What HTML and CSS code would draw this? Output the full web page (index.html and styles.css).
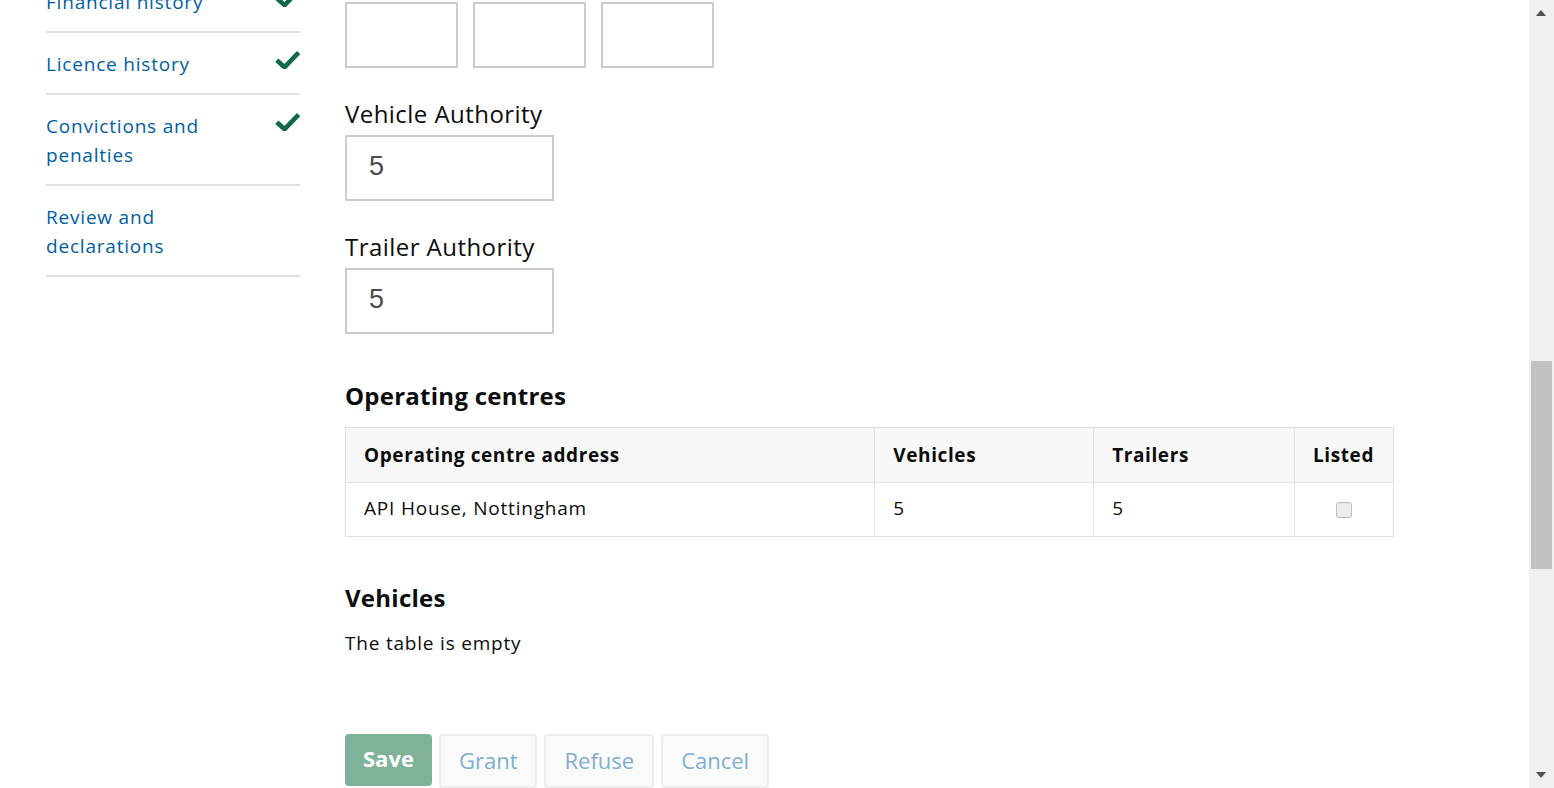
FILE: index.html
```html
<!DOCTYPE html>
<html lang="en">
<head>
<meta charset="utf-8">
<title>Application review</title>
<link rel="stylesheet" href="styles.css">
</head>
<body>
<div class="page">
  <nav class="sidebar">
    <ul class="steps">
      <li class="step">
        <a class="step-link" href="#">Financial history</a>
        <svg class="tick" viewBox="0 0 25 19" aria-hidden="true"><path d="M1.8 10.2 L9.6 17.2 L23.6 2.6" fill="none" stroke="#11684a" stroke-width="4.6"/></svg>
      </li>
      <li class="step">
        <a class="step-link" href="#">Licence history</a>
        <svg class="tick" viewBox="0 0 25 19" aria-hidden="true"><path d="M1.8 10.2 L9.6 17.2 L23.6 2.6" fill="none" stroke="#11684a" stroke-width="4.6"/></svg>
      </li>
      <li class="step">
        <a class="step-link" href="#">Convictions and penalties</a>
        <svg class="tick" viewBox="0 0 25 19" aria-hidden="true"><path d="M1.8 10.2 L9.6 17.2 L23.6 2.6" fill="none" stroke="#11684a" stroke-width="4.6"/></svg>
      </li>
      <li class="step">
        <a class="step-link" href="#">Review and declarations</a>
      </li>
    </ul>
  </nav>

  <main class="main">
    <div class="field">
      <span class="label label-date">Date of application</span>
      <div class="date-row">
        <input class="date-box" type="text" aria-label="Day">
        <input class="date-box" type="text" aria-label="Month">
        <input class="date-box" type="text" aria-label="Year">
      </div>
    </div>

    <div class="field">
      <label class="label" for="veh">Vehicle Authority</label>
      <input class="text-input" id="veh" type="text" value="5">
    </div>

    <div class="field">
      <label class="label" for="trl">Trailer Authority</label>
      <input class="text-input" id="trl" type="text" value="5">
    </div>

    <h2 class="section-title section-title-first">Operating centres</h2>
    <table class="oc-table">
      <thead>
        <tr>
          <th class="col-address">Operating centre address</th>
          <th class="col-vehicles">Vehicles</th>
          <th class="col-trailers">Trailers</th>
          <th class="col-listed">Listed</th>
        </tr>
      </thead>
      <tbody>
        <tr>
          <td>API House, Nottingham</td>
          <td>5</td>
          <td>5</td>
          <td class="cell-center"><input class="listed-box" type="checkbox" disabled aria-label="Listed"></td>
        </tr>
      </tbody>
    </table>

    <h2 class="section-title">Vehicles</h2>
    <p class="empty">The table is empty</p>

    <div class="actions">
      <button class="btn btn-primary" type="button">Save</button>
      <button class="btn" type="button">Grant</button>
      <button class="btn" type="button">Refuse</button>
      <button class="btn" type="button">Cancel</button>
    </div>
  </main>
</div>

<div class="scrollbar" aria-hidden="true">
  <span class="sb-up"></span>
  <span class="sb-thumb"></span>
  <span class="sb-down"></span>
</div>
</body>
</html>
```

FILE: styles.css
```css
* {
  box-sizing: border-box;
}

html,
body {
  margin: 0;
  height: 100%;
  overflow: hidden;
}

body {
  font-family: "Open Sans", "Noto Sans", Arial, sans-serif;
  color: #0b0c0c;
  background: #ffffff;
}

.page {
  display: flex;
  gap: 45px;
  width: 1529px;
  padding-left: 46px;
  margin-top: -31px;
}

/* Sidebar */
.sidebar {
  width: 254px;
  flex: none;
}

.steps {
  list-style: none;
  margin: 0;
  padding: 0;
}

.step {
  display: flex;
  justify-content: space-between;
  align-items: flex-start;
  padding: 17px 0 14px;
  border-top: 2px solid #dee0e2;
}

.step:last-child {
  border-bottom: 2px solid #dee0e2;
}

.step-link {
  width: 200px;
  font-size: 19px;
  line-height: 29px;
  letter-spacing: 0.8px;
  color: #005ea5;
  text-decoration: none;
}

.tick {
  width: 25px;
  height: 19px;
  flex: none;
}

/* Main column */
.main {
  width: 1049px;
  flex: none;
}

.field + .field {
  margin-top: 31px;
}

.label {
  display: block;
  font-size: 24px;
  line-height: 30px;
  letter-spacing: 0.45px;
  margin: 0 0 6px;
}

.label-date {
  margin-bottom: 3px;
}

.date-row {
  display: flex;
  gap: 15px;
}

.date-box {
  width: 113px;
  height: 66px;
  margin: 0;
  border: 2px solid #cccccc;
  background: #fff;
}

.text-input {
  display: block;
  width: 209px;
  height: 66px;
  margin: 0;
  padding: 0 0 4px 22px;
  border: 2px solid #cccccc;
  background: #fff;
  font-family: "Liberation Sans", Arial, sans-serif;
  font-size: 27px;
  color: #4a4a4a;
}

.section-title {
  font-size: 24px;
  font-weight: 700;
  line-height: 30px;
  letter-spacing: 0.25px;
  margin: 0 0 16px;
}

.section-title-first {
  margin-top: 47px;
}

/* Table */
.oc-table {
  width: 1049px;
  border-collapse: collapse;
  border: 1px solid #dee0e2;
  margin-bottom: 46px;
}

.oc-table th {
  text-align: left;
  font-size: 19px;
  font-weight: 700;
  line-height: 30px;
  letter-spacing: 0.6px;
  padding: 12px 18px;
  background: #f8f8f8;
  border: 1px solid #dee0e2;
}

.col-address {
  width: 530px;
}

.col-vehicles {
  width: 219px;
}

.col-trailers {
  width: 201px;
}

.col-listed {
  width: 99px;
}

.oc-table td {
  font-size: 19px;
  line-height: 29px;
  letter-spacing: 0.8px;
  padding: 11px 18px 13px;
  border-left: 1px dotted #cfcfcf;
  border-right: 1px dotted #cfcfcf;
  border-bottom: 1px solid #dee0e2;
}

.oc-table .cell-center {
  text-align: center;
  padding-left: 0;
  padding-right: 0;
}

.listed-box {
  appearance: none;
  -webkit-appearance: none;
  display: inline-block;
  width: 16px;
  height: 16px;
  margin: 0;
  vertical-align: middle;
  border: 1px solid #bdbdbd;
  border-radius: 3px;
  background: #ededed;
}

.empty {
  font-size: 19px;
  line-height: 29px;
  letter-spacing: 0.8px;
  margin: 0 0 76px;
}

/* Buttons */
.actions {
  display: flex;
  gap: 7px;
  align-items: flex-start;
}

.btn {
  height: 54px;
  padding: 0 18px 2px;
  font-family: "Open Sans", "Noto Sans", Arial, sans-serif;
  font-size: 22px;
  line-height: 1;
  color: #7fadd3;
  background: #fafafa;
  border: 2px solid #ececec;
  border-radius: 4px;
}

.btn-primary {
  height: 52px;
  padding: 0 16px 4px;
  font-weight: 700;
  color: #ffffff;
  background: #80b29a;
  border-color: #80b29a;
}

/* Fake window scrollbar (page is scrolled) */
.scrollbar {
  position: fixed;
  top: 0;
  right: 0;
  width: 25px;
  height: 100%;
  background: #f0f0f0;
}

.sb-thumb {
  position: absolute;
  left: 2px;
  top: 361px;
  width: 21px;
  height: 208px;
  background: #c1c1c1;
}

.sb-up,
.sb-down {
  position: absolute;
  left: 7px;
  width: 0;
  height: 0;
  border-left: 5.5px solid transparent;
  border-right: 5.5px solid transparent;
}

.sb-up {
  top: 10px;
  border-bottom: 6px solid #505050;
}

.sb-down {
  top: 772px;
  border-top: 6px solid #505050;
}
```
